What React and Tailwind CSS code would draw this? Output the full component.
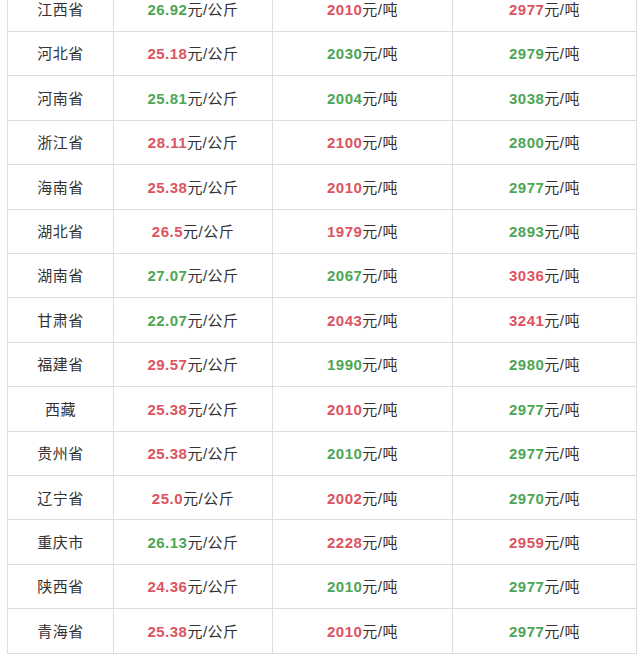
const R = "text-[#dc5461]";
const G = "text-[#4da654]";

const rows = [
  ["江西省", "26.92", G, "2010", R, "2977", R],
  ["河北省", "25.18", R, "2030", G, "2979", G],
  ["河南省", "25.81", G, "2004", G, "3038", G],
  ["浙江省", "28.11", R, "2100", R, "2800", G],
  ["海南省", "25.38", R, "2010", R, "2977", G],
  ["湖北省", "26.5", R, "1979", R, "2893", G],
  ["湖南省", "27.07", G, "2067", G, "3036", R],
  ["甘肃省", "22.07", G, "2043", R, "3241", R],
  ["福建省", "29.57", R, "1990", G, "2980", G],
  ["西藏", "25.38", R, "2010", R, "2977", G],
  ["贵州省", "25.38", R, "2010", G, "2977", G],
  ["辽宁省", "25.0", R, "2002", R, "2970", G],
  ["重庆市", "26.13", G, "2228", R, "2959", R],
  ["陕西省", "24.36", R, "2010", G, "2977", G],
  ["青海省", "25.38", R, "2010", R, "2977", G],
];

function Cell({ children, last }) {
  return (
    <div className={"flex items-center justify-center h-full pt-[2px] " + (last ? "" : "border-r border-[#dedede]")}>
      {children}
    </div>
  );
}

export default function App() {
  return (
    <div className="w-[640px] h-[658px] overflow-hidden bg-white">
      <div
        className="mt-[-12.6px] ml-[7px] w-[630px] border-l border-r border-[#dedede] text-[15px] text-[#333] tracking-[0.5px]"
        style={{ fontFamily: '"Liberation Sans", "Noto Sans CJK SC", sans-serif' }}
      >
        {rows.map((r, i) => (
          <div
            key={i}
            className="grid grid-cols-[106px_159px_180px_183px] h-[44.43px] border-b border-[#dedede] box-border"
          >
            <Cell>{r[0]}</Cell>
            <Cell>
              <span className={"font-bold " + r[2]}>{r[1]}</span>元/公斤
            </Cell>
            <Cell>
              <span className={"font-bold " + r[4]}>{r[3]}</span>元/吨
            </Cell>
            <Cell last>
              <span className={"font-bold " + r[6]}>{r[5]}</span>元/吨
            </Cell>
          </div>
        ))}
      </div>
    </div>
  );
}
